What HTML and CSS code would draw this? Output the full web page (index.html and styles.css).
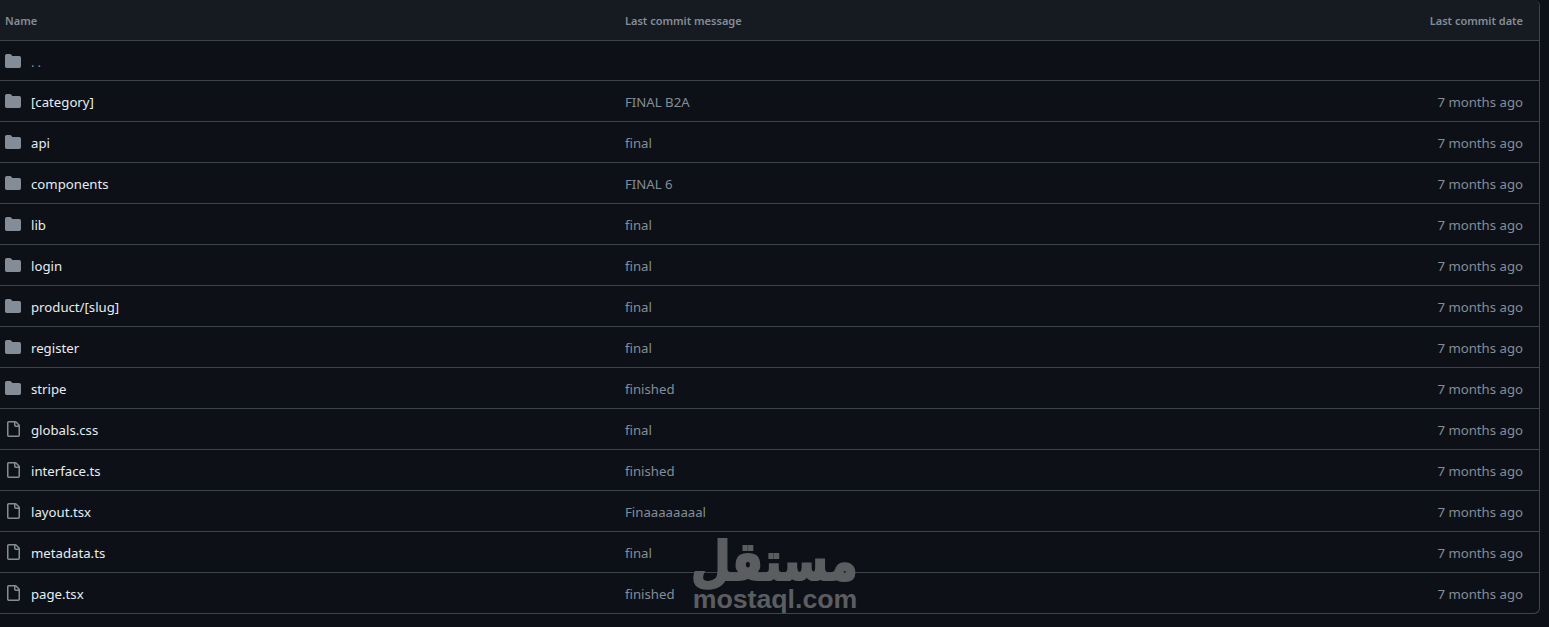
FILE: index.html
```html
<!DOCTYPE html>
<html lang="en">

<head>
    <meta charset="UTF-8">
    <meta name="viewport" content="width=device-width, initial-scale=1.0">
    <title>Files</title>
    <link rel="stylesheet" href="styles.css">
</head>

<body>
    <svg class="icon-defs" aria-hidden="true">
        <symbol id="folder" viewBox="0 0 16 16">
            <path d="M1.75 1A1.75 1.75 0 0 0 0 2.75v10.5C0 14.216.784 15 1.75 15h12.5A1.75 1.75 0 0 0 16 13.25v-8.5A1.75 1.75 0 0 0 14.25 3H7.5a.25.25 0 0 1-.2-.1l-.9-1.2C6.07 1.26 5.55 1 5 1H1.75Z"></path>
        </symbol>
        <symbol id="file" viewBox="0 0 16 16">
            <path d="M2 1.75C2 .784 2.784 0 3.75 0h6.586c.464 0 .909.184 1.237.513l2.914 2.914c.329.328.513.773.513 1.237v9.586A1.75 1.75 0 0 1 13.25 16h-9.5A1.75 1.75 0 0 1 2 14.25Zm1.75-.25a.25.25 0 0 0-.25.25v12.5c0 .138.112.25.25.25h9.5a.25.25 0 0 0 .25-.25V6h-2.75A1.75 1.75 0 0 1 9 4.25V1.5Zm6.75.062V4.25c0 .138.112.25.25.25h2.688l-.011-.013-2.914-2.914-.013-.011Z"></path>
        </symbol>
    </svg>

    <div class="file-table">
        <div class="row head">
            <div class="col-name">Name</div>
            <div class="col-msg">Last commit message</div>
            <div class="col-date">Last commit date</div>
        </div>
        <div class="row up">
            <div class="col-name"><svg class="icon"><use href="#folder"></use></svg><span class="dots">..</span></div>
            <div class="col-msg"></div>
            <div class="col-date"></div>
        </div>
        <div class="row">
            <div class="col-name"><svg class="icon"><use href="#folder"></use></svg><span>[category]</span></div>
            <div class="col-msg">FINAL B2A</div>
            <div class="col-date">7 months ago</div>
        </div>
        <div class="row">
            <div class="col-name"><svg class="icon"><use href="#folder"></use></svg><span>api</span></div>
            <div class="col-msg">final</div>
            <div class="col-date">7 months ago</div>
        </div>
        <div class="row">
            <div class="col-name"><svg class="icon"><use href="#folder"></use></svg><span>components</span></div>
            <div class="col-msg">FINAL 6</div>
            <div class="col-date">7 months ago</div>
        </div>
        <div class="row">
            <div class="col-name"><svg class="icon"><use href="#folder"></use></svg><span>lib</span></div>
            <div class="col-msg">final</div>
            <div class="col-date">7 months ago</div>
        </div>
        <div class="row">
            <div class="col-name"><svg class="icon"><use href="#folder"></use></svg><span>login</span></div>
            <div class="col-msg">final</div>
            <div class="col-date">7 months ago</div>
        </div>
        <div class="row">
            <div class="col-name"><svg class="icon"><use href="#folder"></use></svg><span>product/[slug]</span></div>
            <div class="col-msg">final</div>
            <div class="col-date">7 months ago</div>
        </div>
        <div class="row">
            <div class="col-name"><svg class="icon"><use href="#folder"></use></svg><span>register</span></div>
            <div class="col-msg">final</div>
            <div class="col-date">7 months ago</div>
        </div>
        <div class="row">
            <div class="col-name"><svg class="icon"><use href="#folder"></use></svg><span>stripe</span></div>
            <div class="col-msg">finished</div>
            <div class="col-date">7 months ago</div>
        </div>
        <div class="row">
            <div class="col-name"><svg class="icon"><use href="#file"></use></svg><span>globals.css</span></div>
            <div class="col-msg">final</div>
            <div class="col-date">7 months ago</div>
        </div>
        <div class="row">
            <div class="col-name"><svg class="icon"><use href="#file"></use></svg><span>interface.ts</span></div>
            <div class="col-msg">finished</div>
            <div class="col-date">7 months ago</div>
        </div>
        <div class="row">
            <div class="col-name"><svg class="icon"><use href="#file"></use></svg><span>layout.tsx</span></div>
            <div class="col-msg">Finaaaaaaaal</div>
            <div class="col-date">7 months ago</div>
        </div>
        <div class="row">
            <div class="col-name"><svg class="icon"><use href="#file"></use></svg><span>metadata.ts</span></div>
            <div class="col-msg">final</div>
            <div class="col-date">7 months ago</div>
        </div>
        <div class="row">
            <div class="col-name"><svg class="icon"><use href="#file"></use></svg><span>page.tsx</span></div>
            <div class="col-msg">finished</div>
            <div class="col-date">7 months ago</div>
        </div>
    </div>

    <!-- watermark sits over the table -->
    <div class="watermark">
        <div class="wm-ar" lang="ar" dir="rtl">مستقل</div>
        <div class="wm-en">mostaql.com</div>
    </div>
</body>

</html>
```

FILE: styles.css
```css
body {
    font-family: "Noto Sans", "Liberation Sans", sans-serif;
    font-size: 13.2px;
    margin: 0;
    padding: 0;
    height: 627px;
    overflow: hidden;
    position: relative;
    background-color: #0d1117;
    color: #e6edf3;
}

.icon-defs {
    display: none;
}

.file-table {
    width: 1540px;
    box-sizing: border-box;
    border-right: 1px solid #3d444d;
    border-bottom: 1px solid #3d444d;
    border-radius: 0 6px 6px 0;
    overflow: hidden;
}

.row {
    display: grid;
    grid-template-columns: 620px 1fr 300px;
    align-items: center;
    height: 40px;
    padding: 0 16px 0 5px;
    border-bottom: 1px solid #3d444d;
}

.row:last-child {
    border-bottom: none;
}

.row.up {
    height: 39px;
}

.head {
    background-color: #161b22;
    font-size: 11px;
    font-weight: 600;
    color: #848d97;
}

.col-name {
    display: flex;
    align-items: center;
    gap: 10px;
}

/* text sits a pixel lower than the icons */
.col-name span {
    padding-top: 2px;
}

.col-msg {
    color: #848d97;
    padding-top: 2px;
}

.col-date {
    color: #848d97;
    text-align: right;
    padding-top: 2px;
}

.head .col-msg,
.head .col-date {
    padding-top: 0;
}

.icon {
    width: 16px;
    height: 16px;
    fill: #848d97;
    flex: none;
}

.dots {
    color: #848d97;
    letter-spacing: 3px;
}

.watermark {
    position: absolute;
    left: 688px;
    top: 538px;
    width: 174px;
    text-align: center;
    color: #5b5d61;
    font-weight: 700;
}

.wm-ar {
    font-family: "DejaVu Sans", sans-serif;
    font-size: 48px;
    line-height: 46px;
    -webkit-text-stroke: 2px #5b5d61;
    transform: scale(0.95, 1.12);
}

.wm-en {
    font-family: "Liberation Sans", sans-serif;
    font-size: 26.7px;
    line-height: 28px;
    margin-top: 1px;
}
```
